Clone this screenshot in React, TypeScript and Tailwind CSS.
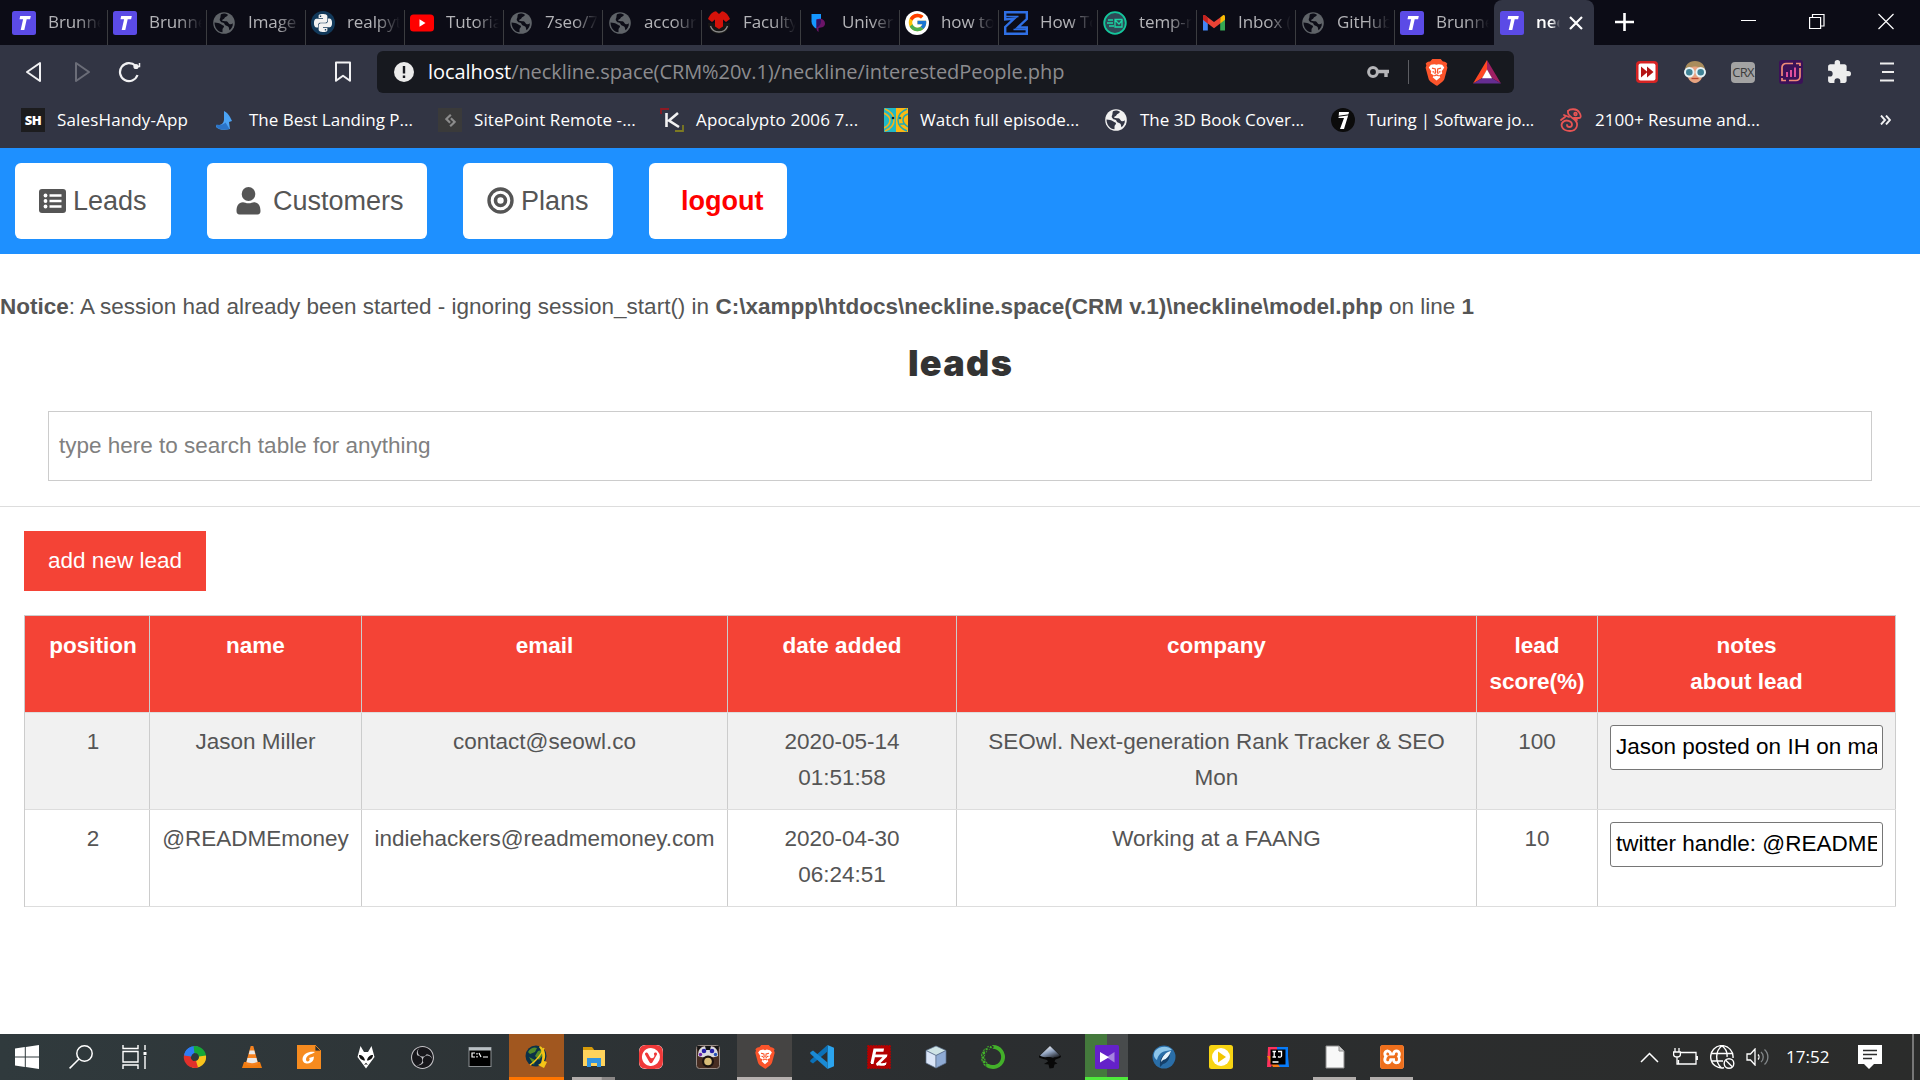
import type { ReactNode } from "react";
import {
  SiAnaconda,
  SiFilezilla,
  SiObsstudio,
  SiPython,
  SiSitepoint,
  SiVivaldi,
  SiXampp,
} from "react-icons/si";
import { FcGoogle } from "react-icons/fc";

/* ---------- favicons ---------- */

const TIcon = () => (
  <svg width="24" height="24" viewBox="0 0 24 24">
    <rect width="24" height="24" rx="2.500" fill="#5b4be6" />
    <path d="M8.200 5h10.600l-.7 3.300h-3.400L12.300 19H8.700l2.400-10.700H7.500z" fill="#fff" />
  </svg>
);

const Globe = ({ fill, land }: { fill: string; land: string }) => (
  <svg width="24" height="24" viewBox="0 0 24 24">
    <circle cx="12" cy="12" r="10.800" fill={fill} />
    <path
      d="M2.500 11.500c2.500.2 5 .4 6.500 1.800 1 1 2.500.8 3 2 .3 1.200-1.500 2-1.500 3.200v2.800C6 21 2.600 17 2.500 11.500zM9 3.200c3-1.200 5.500-.4 7 .8-1 1.800-3 1.600-3.600 3.200-.3 1.200-2.400.8-2.200 2.300.1.9 2.300.5 4.300.7 1.700.2 1.600 2.200 2.800 2.700 1.300.5 2.700.2 3.500-.7.400 3-1.400 5.600-3.300 7.100-.6-1.500-.3-2.600-1.400-3.700-1.200-1-3.300-.8-3.600-2.500-.3-1.600-1.700-1-3-1.800C8 10.200 7 8.500 8.200 7 8.800 6 8.200 4.500 9 3.200z"
      fill={land}
    />
  </svg>
);

const PyIcon = () => (
  <span className="flex size-6 items-center justify-center rounded-full bg-[#12395a]">
    <SiPython size={18} color="#f2f2f2" />
  </span>
);

const YtIcon = () => (
  <svg width="24" height="24" viewBox="0 0 24 24">
    <rect x="0" y="3.500" width="24" height="17" rx="3.500" fill="#f00" />
    <path d="M9.500 8.300v7.400l6-3.700z" fill="#fff" />
  </svg>
);

const FacultyIcon = () => (
  <svg width="24" height="24" viewBox="0 0 24 24">
    <path d="M1 12a11 11 0 0 0 22 0z" fill="#161616" />
    <path d="M3.500 15c2.500 8 14.500 8 17 0" fill="none" stroke="#8a8a8a" strokeWidth="1.300" />
    <path d="M1 8C3 3 6.500.5 9 .3L12 3l3-2.700c2.500.2 6 2.700 8 7.700l-4 3-3-2.500v7l-4 2.500-4-2.500v-7L5 11z" fill="#d4120a" />
  </svg>
);

const UniIcon = () => (
  <svg width="24" height="24" viewBox="0 0 24 24">
    <path d="M5.500 3H15v7.500c0 4-3 6-5 7-2.500-1.500-4.500-4-4.500-7z" fill="#1597ff" />
    <path d="M10.500 8.500c4-2 8.500 0 8.500 4 0 3.500-3 4-6.500 4.500V21c-2-1-2-3-2-5z" fill="#6b1468" />
    <path d="M10.500 8.500H15v2c0 3-2 5-4.500 6.500z" fill="#31105f" />
  </svg>
);

const ZIcon = () => (
  <svg width="24" height="24" viewBox="0 0 24 24" fill="none" stroke="#2f6fe4" strokeWidth="2.400">
    <path d="M1.200 8.500V1.200h21.600V8l-9 8.500h9v6.300H1.200V16l9-8.500z" />
    <path d="M1 5.500h13.500M9.500 18.500H23" strokeWidth="1.600" />
  </svg>
);

const TempIcon = () => (
  <svg width="24" height="24" viewBox="0 0 24 24">
    <circle cx="12" cy="12" r="10.800" fill="#2f4a57" stroke="#14c79c" strokeWidth="1.800" />
    <path d="M5 9h5M4 12h6M6 15h5M12 8.500h7v7.500h-7zM12 9l4 4 3.500-4" fill="none" stroke="#1dd6a5" strokeWidth="1.300" />
  </svg>
);

const GmailIcon = () => (
  <svg width="24" height="24" viewBox="0 0 24 24">
    <path d="M1 6v13.500h4.800V9z" fill="#4285f4" />
    <path d="M23 6v13.500h-4.800V9z" fill="#34a853" />
    <path d="M18.200 6.500L21 4.300c1-.6 2 .2 2 1.400v3l-4.800 3.800z" fill="#fbbc04" />
    <path d="M1 8.700V5.700c0-1.200 1-2 2-1.400L12 11l6.200-4.500v6L12 17.200 5.800 12.500z" fill="#ea4335" />
    <path d="M1 8.700V5.700c0-1.200 1-2 2-1.400l2.800 2.200v6z" fill="#c5221f" />
  </svg>
);

const gray = <Globe fill="#5f6368" land="#0c0c16" />;

type Tab = { icon: ReactNode; label: string };
const tabs: Tab[] = [
  { icon: <TIcon />, label: "Brunne" },
  { icon: <TIcon />, label: "Brunne" },
  { icon: gray, label: "Image" },
  { icon: <PyIcon />, label: "realpyt" },
  { icon: <YtIcon />, label: "Tutoria" },
  { icon: gray, label: "7seo/7" },
  { icon: gray, label: "accour" },
  { icon: <FacultyIcon />, label: "Faculty" },
  { icon: <UniIcon />, label: "Univer" },
  {
    icon: (
      <span className="flex size-6 items-center justify-center rounded-full bg-white">
        <FcGoogle size={21} />
      </span>
    ),
    label: "how to",
  },
  { icon: <ZIcon />, label: "How To" },
  { icon: <TempIcon />, label: "temp-m" },
  { icon: <GmailIcon />, label: "Inbox (" },
  { icon: gray, label: "GitHub" },
  { icon: <TIcon />, label: "Brunne" },
];

const TabBar = () => (
  <div className="flex h-[45px] bg-[#0c0c16] pl-[9px]">
    {tabs.map((t, i) => (
      <div key={i} className={"flex h-full w-[99px] shrink-0 items-center " + (i === 0 ? "pl-[3px]" : "pl-[5px]")}>
        <span className="flex size-6 shrink-0">{t.icon}</span>
        <span className="mb-[2px] ml-3 w-[53px] overflow-hidden text-[17px] leading-6 tracking-[-0.100px] whitespace-nowrap text-[#b4b4b8] [mask-image:linear-gradient(to_right,#000_55%,transparent)]">
          {t.label}
        </span>
        {i < 14 && <span className="mt-auto ml-auto h-[35px] w-px shrink-0 bg-[#3b3c40]" />}
      </div>
    ))}
    <div className="flex h-full w-[100px] shrink-0 items-center rounded-t-lg bg-[#323544] pl-[6px]">
      <TIcon />
      <span className="mb-[2px] ml-3 w-[24px] overflow-hidden text-[17px] font-semibold whitespace-nowrap text-white [mask-image:linear-gradient(to_right,#000_65%,transparent)]">
        nec
      </span>
      <svg className="ml-[9px]" width="14" height="14" viewBox="0 0 14 14" stroke="#fff" strokeWidth="2.200">
        <path d="M1 1l12 12M13 1L1 13" />
      </svg>
    </div>
    <svg className="mt-[13px] ml-[21px] shrink-0" width="19" height="18" viewBox="0 0 19 18" stroke="#fff" strokeWidth="2.600">
      <path d="M9.500 0v18M0 9h19" />
    </svg>
    <div className="mt-[13px] mr-[26px] ml-auto flex shrink-0 gap-[53px] text-white">
      <svg width="16" height="18" viewBox="0 0 16 18" stroke="currentColor">
        <path d="M1 7.500h15" />
      </svg>
      <svg width="16" height="18" viewBox="0 0 16 18" fill="none" stroke="currentColor" strokeWidth="1.200">
        <path d="M.6 4.500h11v11H.6zM3.500 4.500v-3h11.500v11.500h-3.400" />
      </svg>
      <svg width="16" height="18" viewBox="0 0 16 18" stroke="currentColor" strokeWidth="1.200">
        <path d="M.5 1l15 15M15.500 1l-15 15" />
      </svg>
    </div>
  </div>
);

const BraveIcon = ({ size }: { size: number }) => (
  <svg width={size} height={size} viewBox="0 0 24 24">
    <path
      d="M15.700 0H8.300L6.300 2.300C4.500 1.800 3 3.500 2.400 4.200l.6 1.400-.7 2.200 2.500 9.300c.4 1.500 1 2.300 2 3.100l4.200 2.900c.6.400 1.500.9 2 .4l4.200-3.300c1-.8 1.600-1.600 2-3.100l2.500-9.300-.7-2.200.6-1.400c-.7-.8-2.200-2.200-3.900-1.900z"
      fill="#fb542b"
    />
    <path
      d="M7 5.200l3.200-.6L12 5.200l1.800-.6 3.200.6 1.900 2.400-2.200 3.300.4 2-2.900 1.700 1.200 1.700-3.400 2.900-3.400-2.900 1.200-1.700-2.900-1.700.4-2-2.200-3.300z"
      fill="#fff"
    />
    <path
      d="M8 8.200l2.900.7.300 2.700-.8 1.600M16 8.200l-2.900.7-.3 2.700.8 1.600M10 15l2-.9 2 .9M8.500 11.300l1.500.3M15.500 11.300l-1.500.3"
      fill="none"
      stroke="#fb542b"
      strokeWidth="1.100"
    />
  </svg>
);

const Toolbar = () => (
  <div className="flex h-[54px] items-center pl-[25px]">
    <div className="flex w-[352px] items-center">
      <svg width="17" height="22" viewBox="0 0 17 22" fill="none" stroke="#f1f1f3" strokeWidth="2" strokeLinejoin="round">
        <path d="M15 2v18L2 11z" />
      </svg>
      <svg className="ml-8" width="17" height="22" viewBox="0 0 17 22" fill="none" stroke="#6b6d78" strokeWidth="2" strokeLinejoin="round">
        <path d="M2 2v18l13-9z" />
      </svg>
      <svg className="ml-[27px]" width="23" height="22" viewBox="0 0 23 22" fill="none" stroke="#f1f1f3" strokeWidth="2.200">
        <path d="M17.500 4.800A9 9 0 1 0 19.500 14" />
        <circle cx="18" cy="5.500" r="2.600" fill="#f1f1f3" stroke="none" />
        <path d="M18 5.500h3.500V2" strokeWidth="1.500" />
      </svg>
      <svg className="ml-[193px]" width="18" height="22" viewBox="0 0 18 22" fill="none" stroke="#f1f1f3" strokeWidth="2" strokeLinejoin="round">
        <path d="M2 1.500h14v18.300l-7-5-7 5z" />
      </svg>
    </div>
    <div className="flex h-[42px] w-[1137px] items-center rounded-md bg-[#17191f] pl-[17px]">
      <svg width="20" height="20" viewBox="0 0 20 20">
        <circle cx="10" cy="10" r="10" fill="#ebebeb" />
        <path d="M8.800 4h2.400v7.500H8.800zM8.800 13.500h2.400v2.500H8.800z" fill="#17191f" />
      </svg>
      <span className="ml-[14px] text-[20px] tracking-[-0.070px] text-[#8c8c8f]">
        <span className="text-white">localhost</span>/neckline.space(CRM%20v.1)/neckline/interestedPeople.php
      </span>
      <svg className="mr-[18px] ml-auto" width="23" height="14" viewBox="0 0 23 14" fill="none" stroke="#b5b5b8">
        <circle cx="6" cy="7" r="4.400" strokeWidth="3" />
        <path d="M10 6.500h12M19 6.500V12" strokeWidth="3.400" />
      </svg>
      <span className="h-6 w-[1.500px] bg-[#5d5e63]" />
      <span className="ml-[14px] flex">
        <BraveIcon size={27} />
      </span>
      <svg className="mr-[13px] ml-[23px]" width="28" height="24" viewBox="0 0 28 24">
        <path d="M14 0L0 23.500 9.300 18 14 10z" fill="#ff4724" />
        <path d="M14 0l14 23.500L18.700 18 14 10z" fill="#9e1f63" />
        <path d="M0 23.500h28L18.700 18H9.300z" fill="#662d91" />
        <path d="M14 9.500l5 8.800H9z" fill="#fff" />
      </svg>
    </div>
    <div className="ml-[121px] flex items-center gap-6">
      <svg width="24" height="24" viewBox="0 0 24 24">
        <rect x="1" y="1" width="22" height="22" rx="4" fill="#d62323" />
        <rect x="3.500" y="3.500" width="17" height="17" rx="2" fill="#fff" />
        <path d="M6 6.500l6.500 5.500L6 17.500zM12 6.500l6.500 5.500-6.500 5.500z" fill="#b31515" />
      </svg>
      <svg width="24" height="24" viewBox="0 0 24 24">
        <path d="M2 13C1 5 6 1 12 1s11 4 10 12z" fill="#a98c5c" />
        <path d="M4 11c3-6 13-6 16 0 .5 7-3.500 12-8 12s-8.500-5-8-12z" fill="#e8a380" />
        <path d="M8.500 18.500h7" stroke="#b5462f" strokeWidth="1.300" />
        <circle cx="6.300" cy="12.300" r="4.300" fill="#3f8296" stroke="#e6f2f5" strokeWidth="2" />
        <circle cx="17.700" cy="12.300" r="4.300" fill="#3f8296" stroke="#e6f2f5" strokeWidth="2" />
      </svg>
      <span className="flex h-[21px] w-6 items-center justify-center rounded-sm bg-[#a3a3a3] text-[13px] leading-none tracking-[-0.800px] text-[#3c3c3c]">
        CRX
      </span>
      <svg width="24" height="24" viewBox="0 0 24 24" fill="none">
        <rect width="24" height="24" rx="3" fill="#3c1158" />
        <path d="M14 3.500H7a4 4 0 0 0-4 4V16M10 20.500h7a4 4 0 0 0 4-4V8M3 18v2.500h4M21 6V3.500h-4" stroke="#f08c78" strokeWidth="1.700" />
        <path d="M8 12v5M12 10v7M16 7.500V17" stroke="#e0509b" strokeWidth="2" />
      </svg>
      <svg width="24" height="24" viewBox="1 1 22 22" fill="#ededed">
        <path d="M20.500 11H19V7c0-1.100-.9-2-2-2h-4V3.500a2.500 2.500 0 0 0-5 0V5H4c-1.100 0-2 .9-2 2v3.800h1.500a2.700 2.700 0 0 1 0 5.400H2V20c0 1.100.9 2 2 2h3.800v-1.500a2.700 2.700 0 0 1 5.400 0V22H17c1.100 0 2-.9 2-2v-4h1.500a2.500 2.500 0 0 0 0-5z" />
      </svg>
      <svg className="ml-1" width="15" height="20" viewBox="0 0 15 20" stroke="#ededed" strokeWidth="2">
        <path d="M1 1.500h14M3 10h12M1 18.500h14" />
      </svg>
    </div>
  </div>
);

const Bookmark = ({ icon, label, cell }: { icon: ReactNode; label: string; cell: string }) => (
  <div className={"flex shrink-0 items-center whitespace-nowrap " + cell}>
    <span className="mr-3 flex size-6 shrink-0 items-center justify-center">{icon}</span>
    {label}
  </div>
);

const Bookmarks = () => (
  <div className="flex h-[49px] items-center pb-[7px] pl-[21px] text-[17px] leading-6 text-white">
    <Bookmark
      cell="w-[192px] tracking-[0.150px]"
      label="SalesHandy-App"
      icon={
        <span className="flex size-6 items-center justify-center bg-[#1c1c1e] text-[13px] font-extrabold tracking-[-0.500px]">SH</span>
      }
    />
    <Bookmark
      cell="w-[225px]"
      label="The Best Landing P..."
      icon={
        <svg width="24" height="24" viewBox="0 0 24 24">
          <path d="M11 3c3 1.500 5 4 6 6l2 4-3 1 1 7c-5 1.500-11 1-14-2l.5-2c4 .5 8-1 7.500-7z" fill="#4ba3f5" />
          <path d="M3.500 16.500c3 .8 7 .5 9-2l4 6.500c-5 1-10 1-13-2z" fill="#2b74c8" />
        </svg>
      }
    />
    <Bookmark
      cell="w-[222px] tracking-[0.100px]"
      label="SitePoint Remote -..."
      icon={
        <span className="flex size-6 items-center justify-center bg-[#3a3a3a]">
          <SiSitepoint size={13} color="#8b8b8b" />
        </span>
      }
    />
    <Bookmark
      cell="w-[224px] tracking-[0.150px]"
      label="Apocalypto 2006 7..."
      icon={
        <svg width="24" height="24" viewBox="0 0 24 24" fill="none">
          <path d="M1 6V1h8" stroke="#8d1a24" strokeWidth="1.800" />
          <path d="M15 23h8v-6" stroke="#7d7a22" strokeWidth="1.800" />
          <path d="M6.500 5v14M18 5l-9 7.500 10 6.500" stroke="#f2f2f2" strokeWidth="2.600" />
        </svg>
      }
    />
    <Bookmark
      cell="w-[220px]"
      label="Watch full episode..."
      icon={
        <svg width="24" height="24" viewBox="0 0 24 24" fill="none">
          <path d="M0 0h12v24H0z" fill="#21b9c6" />
          <path d="M12 0h12v24H12z" fill="#fdb813" />
          <path d="M1 1c5 2 9 5 9 11s-4 9-9 11M0 5c4 2 6 4 6 7s-2 6-6 8" stroke="#f5b21b" strokeWidth="1.600" />
          <path d="M23 1c-5 2-9 5-9 11s4 9 9 11M24 6c-3 1-5 3-5 6s2 5 5 7M16 16h4" stroke="#21a9b4" strokeWidth="1.500" />
          <circle cx="9" cy="10" r="1.300" fill="#123" />
          <circle cx="16" cy="10" r="1.300" fill="#0a7f8a" />
        </svg>
      }
    />
    <Bookmark cell="w-[227px]" label="The 3D Book Cover..." icon={<Globe fill="#f1f1f1" land="#323544" />} />
    <Bookmark
      cell="w-[228px] tracking-[-0.200px]"
      label="Turing | Software jo..."
      icon={
        <svg width="24" height="24" viewBox="0 0 24 24">
          <circle cx="12" cy="12" r="12" fill="#0b0b0b" />
          <path d="M8 4h10l-1 4-4 13H9l4-11H7.500z" fill="#fff" />
          <path d="M7 8.300L18 6.800" stroke="#0b0b0b" strokeWidth="1" />
        </svg>
      }
    />
    <Bookmark
      cell="w-[240px]"
      label="2100+ Resume and..."
      icon={
        <svg width="24" height="24" viewBox="0 0 24 24" fill="none" stroke="#e85454" strokeWidth="1.800" strokeLinecap="round">
          <path d="M9 3c2-2.500 9-2.500 11 1 2 3 2.500 6 0 6h-5" />
          <circle cx="16.500" cy="6" r="1.300" />
          <path d="M9 3C8 8 13 9 16 12c4 4 2 11-5 11-8 0-10-6-7-9 3-3 9-1 9 2.500 0 3.500-5 3-5 .5" />
          <path d="M2 12l4-3M10 9L5 7M15 10l3 2" />
        </svg>
      }
    />
    <svg className="ml-[81px]" width="11" height="10" viewBox="0 0 11 10" fill="none" stroke="#f1f1f3" strokeWidth="1.900">
      <path d="M1 .5l4 4.500-4 4.500M6 .5L10 5 6 9.500" />
    </svg>
  </div>
);

/* ---------- page ---------- */

const NavButton = ({ cell, children }: { cell: string; children: ReactNode }) => (
  <div className={"flex h-[76px] items-center rounded-[6px] bg-white pb-px text-[27px] whitespace-nowrap text-[#555] " + cell}>{children}</div>
);

const Nav = () => (
  <nav className="flex h-[106px] items-start gap-9 bg-[#1e90ff] pt-[15px] pl-[15px]">
    <NavButton cell="w-[156px] pl-6">
      <svg className="mr-[7px]" width="27" height="24" viewBox="0 0 27 24">
        <rect width="27" height="24" rx="3" fill="#555" />
        <g fill="#fff">
          <circle cx="6.500" cy="6.500" r="1.900" />
          <circle cx="6.500" cy="12" r="1.900" />
          <circle cx="6.500" cy="17.500" r="1.900" />
          <path d="M10.500 5.200h12v2.600h-12zM10.500 10.700h12v2.600h-12zM10.500 16.200h12v2.600h-12z" />
        </g>
      </svg>
      Leads
    </NavButton>
    <NavButton cell="w-[220px] pl-[29px]">
      <svg className="mr-[12px]" width="25" height="28" viewBox="0 0 25 28" fill="#555">
        <ellipse cx="12.500" cy="7" rx="6.800" ry="7" />
        <path d="M.5 24c0-5 2-8.800 6.500-8.800 1.500 0 3 1.100 5.500 1.100s4-1.100 5.500-1.100c4.500 0 6.500 3.800 6.500 8.800 0 2.200-1 3.500-3 3.500h-18c-2 0-3-1.300-3-3.500z" />
      </svg>
      Customers
    </NavButton>
    <NavButton cell="w-[150px] pl-6">
      <svg className="mr-[7px]" width="27" height="27" viewBox="0 0 27 27" fill="none" stroke="#555">
        <circle cx="13.500" cy="13.500" r="11.500" strokeWidth="3.400" />
        <circle cx="13.500" cy="13.500" r="5" strokeWidth="3.600" />
      </svg>
      Plans
    </NavButton>
    <NavButton cell="w-[138px] pl-8">
      <span className="font-bold text-[#f00]">logout</span>
    </NavButton>
  </nav>
);

const columns = ["position", "name", "email", "date added", "company", "lead\nscore(%)", "notes\nabout lead"];
const leads = [
  ["1", "Jason Miller", "contact@seowl.co", "2020-05-14\n01:51:58", "SEOwl. Next-generation Rank Tracker & SEO\nMon", "100"],
  ["2", "@READMEmoney", "indiehackers@readmemoney.com", "2020-04-30\n06:24:51", "Working at a FAANG", "10"],
];
const notes = ["Jason posted on IH on march", "twitter handle: @READMEmoney"];

const rowClass =
  "grid h-[97px] grid-cols-[125px_212px_366px_229px_520px_121px_298px] border-b border-[#ddd] text-center leading-9 whitespace-pre";

const Page = () => (
  <main className="flex h-[886px] flex-col bg-white font-['Liberation_Sans',sans-serif] text-[22.500px] leading-9 text-[#555]">
    <Nav />
    <p className="mt-[35px] h-9 whitespace-nowrap">
      <b>Notice</b>: A session had already been started - ignoring session_start() in{" "}
      <b>C:\xampp\htdocs\neckline.space(CRM v.1)\neckline\model.php</b> on line <b>1</b>
    </p>
    <h2 className="mt-[14px] h-12 pl-[1px] text-center font-['Inter',sans-serif] text-[36px] leading-[48px] font-black tracking-[1.300px] text-[#333]">
      leads
    </h2>
    <div className="mx-12 mt-[24px] flex h-[70px] items-center border border-[#ccc] px-[10px] pb-px text-[#808080]">
      type here to search table for anything
    </div>
    <div className="mt-[25px] h-px bg-[#ddd]" />
    <div className="mt-[24px] ml-6 flex h-[60px] w-[182px] items-center justify-center bg-[#f44336] pb-px text-white">add new lead</div>
    <div className="mx-6 mt-6 border-t border-l border-[#ccc]">
      <div className={rowClass + " bg-[#f44336] font-bold text-white"}>
        {columns.map((c) => (
          <div key={c} className="border-r border-[#ccc] pt-3 first:pl-3">
            {c}
          </div>
        ))}
      </div>
      {leads.map((r, i) => (
        <div key={i} className={rowClass + (i === 0 ? " bg-[#f1f1f1]" : " bg-white")}>
          {r.map((c, j) => (
            <div key={j} className="border-r border-[#ccc] pt-[11px] first:pl-3">
              {c}
            </div>
          ))}
          <div className="border-r border-[#ccc] px-3 pt-3">
            <div className="h-[45px] rounded-[3px] border-[1.500px] border-[#767676] bg-white px-[5px] text-left leading-[42px] text-black">
              <div className="overflow-hidden">{notes[i]}</div>
            </div>
          </div>
        </div>
      ))}
    </div>
  </main>
);

/* ---------- taskbar ---------- */

const TaskItem = ({ children, under, tile }: { children: ReactNode; under?: string; tile?: string }) => (
  <div className="flex h-full w-[57px] shrink-0 justify-center">
    <div className={"flex h-full shrink-0 flex-col items-center " + (tile ?? "w-[43px]")}>
      <div className="flex h-[43px] items-center pt-[3px]">{children}</div>
      <div className={"h-[3px] w-full " + (under ?? "")} />
    </div>
  </div>
);

const Taskbar = () => (
  <footer className="flex h-[46px] bg-linear-to-r from-[#303a3d] via-[#2b2e30] to-[#2b2c2b] text-white">
    <div className="flex h-full w-[54px] items-center justify-center">
      <svg width="24" height="24" viewBox="0 0 24 24" fill="#fff">
        <path d="M0 3.400l9.800-1.300v9.400H0zM10.800 1.900L24 0v11.500H10.800zM0 12.500h9.800v9.400L0 20.600zM10.800 12.500H24V24l-13.200-1.900z" />
      </svg>
    </div>
    <div className="flex h-full w-[54px] items-center justify-center">
      <svg width="24" height="24" viewBox="0 0 24 24" fill="none" stroke="#fff" strokeWidth="1.500">
        <circle cx="15.500" cy="8.500" r="7.700" />
        <path d="M10 14L.6 23.400" />
      </svg>
    </div>
    <div className="flex h-full w-[58px] items-center justify-center pr-px">
      <svg className="mr-1" width="25" height="24" viewBox="0 0 25 24" fill="none" stroke="#fff" strokeWidth="1.400">
        <path d="M1 0v3.500h15V0M1 6.500h15v10.500H1zM1 24v-4h15v4M23 0v5M23 11v13" />
        <path d="M21.500 7h3v3h-3z" fill="#fff" stroke="none" />
      </svg>
    </div>
    <TaskItem>
      <svg width="24" height="24" viewBox="0 0 24 24" fill="none" strokeWidth="7">
        <path d="M4.500 12A7.500 7.500 0 0 1 14 4.800" stroke="#2d7df6" />
        <path d="M11 4.600a7.500 7.500 0 0 1 8.300 9" stroke="#17a637" />
        <path d="M19.500 11a7.500 7.500 0 0 1-9.500 8.200" stroke="#f9c31c" />
        <path d="M14 19.200A7.500 7.500 0 0 1 4.600 10" stroke="#e2302b" />
        <path d="M4.600 11A7.500 7.500 0 0 1 9 5.200" stroke="#2d7df6" />
      </svg>
    </TaskItem>
    <TaskItem>
      <svg width="24" height="24" viewBox="0 0 24 24">
        <path d="M4 17h16l2 6H2z" fill="#f07c10" />
        <path d="M10.700 1h2.600l5 18c-3 2-9.600 2-12.600 0z" fill="#f58220" />
        <path d="M9.700 5.500h4.600l1 3.800H8.700zM7.500 13h9l1 4c-3 1.500-8 1.500-11 0z" fill="#e9e9e9" />
      </svg>
    </TaskItem>
    <TaskItem>
      <svg width="24" height="24" viewBox="0 0 24 24">
        <path d="M0 0h18l6 6v18H0z" fill="#f68b1f" />
        <path d="M18 0l6 6h-6z" fill="#2c2f30" stroke="#f68b1f" strokeWidth=".8" />
        <path d="M18 7c-5-1-12 1-12.500 7 0 6 9 6 11 .5l.5-3-5 1.500c1 .8 1 3-1 3.500-3 .3-2.500-5 1-6.500 2-1 4-1.500 6-3z" fill="#fff" />
      </svg>
    </TaskItem>
    <TaskItem>
      <svg width="24" height="24" viewBox="0 0 24 24">
        <path d="M6.500 1l3.500 6h4l3.500-6 3 11L12 23.500 3.500 12z" fill="#fff" />
        <path d="M5 10c3 0 5.500 2 6 5.500C7.500 15.500 5 13 5 10zM19 10c-3 0-5.500 2-6 5.500 3.500 0 6-2.500 6-5.500zM10 20l2-2.200 2 2.200-2-.7z" fill="#111" />
      </svg>
    </TaskItem>
    <TaskItem>
      <span className="flex size-[23px] items-center justify-center rounded-full bg-[#17171b]">
        <SiObsstudio size={23} color="#c4c4c8" />
      </span>
    </TaskItem>
    <TaskItem>
      <svg width="24" height="24" viewBox="0 0 24 24">
        <rect x="1" y="2.500" width="22" height="19" fill="#000" stroke="#8c9093" />
        <path d="M1 2.500h22v3H1z" fill="#b9c0c4" />
        <path d="M7 8H4v4h3M9 8v1.500M9 11v1.500M11 8l2 4M15 12h5" stroke="#fff" strokeWidth="1.200" fill="none" />
      </svg>
    </TaskItem>
    <TaskItem tile="w-[55px] bg-[#a1571f]" under="bg-[#ff7500]">
      <svg width="24" height="24" viewBox="0 0 24 24">
        <circle cx="11" cy="11" r="10.500" fill="#0b3148" />
        <path d="M3 7c3-5 7-5 9-4l-2 4-5 2zM13 6l4-1 1 5-4 5-4-4zM4 12l6 3-1 5z" fill="#528b2b" />
        <path d="M15 1c6 3 6 11 4 15l3 1-3 6-6-3 3-2c2-6 2-11-2-16z" fill="#f4c417" />
        <path d="M19 3C16 10 11 16 5 20" stroke="#f4c417" strokeWidth="1.500" fill="none" />
      </svg>
    </TaskItem>
    <TaskItem under="bg-linear-to-r from-[#b1adab] from-68% to-[#8a8786] to-70%">
      <svg width="24" height="22" viewBox="0 0 24 22">
        <path d="M1 1h9l2 2.500V6H1z" fill="#d79b09" />
        <path d="M1 4h22v16H1z" fill="#ffd35c" />
        <path d="M5 21v-9h14v9h-4v-4H9v4z" fill="#3294df" />
      </svg>
    </TaskItem>
    <TaskItem>
      <span className="flex size-6 items-center justify-center rounded-md bg-white">
        <SiVivaldi size={24} color="#ef3939" />
      </span>
    </TaskItem>
    <TaskItem>
      <svg width="24" height="24" viewBox="0 0 24 24">
        <rect x=".5" y=".5" width="23" height="23" rx="3" fill="#472d22" stroke="#998c86" />
        <path d="M2 11C2 3 6 1 12 1s10 2 10 10c-5 2-15 2-20 0z" fill="#d9d9df" />
        <path d="M1 1h5L2 6zM23 1h-5l4 5zM9 1h6l-1 4h-4z" fill="#151515" />
        <circle cx="8" cy="6" r="2.300" fill="#2620a8" />
        <circle cx="16" cy="6" r="2.300" fill="#2620a8" />
        <circle cx="4.500" cy="9.500" r="1.700" fill="#6a22a8" />
        <circle cx="19.500" cy="9.500" r="1.700" fill="#2450b8" />
        <circle cx="12" cy="16.500" r="6" fill="#1c1411" />
        <circle cx="12" cy="16.500" r="3.800" fill="#d9bd78" />
      </svg>
    </TaskItem>
    <TaskItem tile="w-[55px] bg-[#454443]" under="bg-[#b7b1af]">
      <BraveIcon size={24} />
    </TaskItem>
    <TaskItem>
      <svg width="24" height="24" viewBox="0 0 24 24">
        <path d="M17.500 0L24 2.800v18.400L17.500 24z" fill="#2ba4ee" />
        <path d="M17.500 0v6.500L3 18.500.3 16.800v-1.600z" fill="#0b71b8" />
        <path d="M17.500 24v-6.500L3 5.500.3 7.200v1.600z" fill="#1a8ad4" />
      </svg>
    </TaskItem>
    <TaskItem>
      <span className="flex size-6 items-center justify-center bg-[radial-gradient(#fff_60%,transparent_62%)]">
        <SiFilezilla size={24} color="#b30000" />
      </span>
    </TaskItem>
    <TaskItem>
      <svg width="24" height="24" viewBox="0 0 24 24" stroke="#5f7391" strokeWidth=".7">
        <path d="M12 1l10 4.500-10 5-10-5z" fill="#cfe4e6" />
        <path d="M2 5.500l10 5V23L2 18z" fill="#dbe6f8" />
        <path d="M22 5.500l-10 5V23l10-5z" fill="#8fabd4" />
      </svg>
    </TaskItem>
    <TaskItem>
      <SiAnaconda size={24} color="#43b02a" />
    </TaskItem>
    <TaskItem>
      <svg width="24" height="24" viewBox="0 0 24 24">
        <defs>
          <linearGradient id="ink" x1=".2" y1="0" x2=".8" y2="1">
            <stop offset="0" stopColor="#fff" />
            <stop offset=".5" stopColor="#8ea0bd" />
            <stop offset="1" stopColor="#1a1c20" />
          </linearGradient>
        </defs>
        <path
          d="M12 1l10.500 9.500c1 1 .3 2-1 2.500l-4 1.500-1 2 3 2-3 1-1 3.500-4 .5-1-4-4.500-.5 4-2.500-1-1.500-7-2c-1.200-.5-1.300-1.500-.5-2.500z"
          fill="#080808"
        />
        <path d="M12 1l10 9.500c-2 2.500-5 1-7 2.500-4-2.500-9 1-13-2.500z" fill="url(#ink)" />
      </svg>
    </TaskItem>
    <TaskItem tile="w-[43px] bg-linear-to-r from-[#44793c] from-50% to-[#484b4c] to-50%" under="bg-[#4fea3c]">
      <svg width="24" height="24" viewBox="0 0 24 24">
        <rect width="24" height="24" rx="1.500" fill="#6421c9" />
        <path d="M19.500 7v10.500l-8-5.300z" fill="#a583df" />
        <path d="M5 7v10.500l9-5.300z" fill="#fff" />
      </svg>
    </TaskItem>
    <TaskItem>
      <svg width="24" height="24" viewBox="0 0 24 24">
        <circle cx="12" cy="12" r="11.500" fill="#2a6ea8" />
        <path d="M3 6C7 1 16 0 20 5l-6 1C8 7 6 11 5 15 2 13 1 10 3 6z" fill="#8cc5ea" />
        <path d="M18 7c-6 1-11 6-10 15l3-3c5-1 7-6 7-12z" fill="#14406b" />
        <path d="M19 6c-5 1-9 5-10 11l2-2c4-1 6-4 8-9z" fill="#e8f4fc" />
      </svg>
    </TaskItem>
    <TaskItem>
      <svg width="24" height="24" viewBox="0 0 24 24">
        <rect width="24" height="24" rx="2.500" fill="#f7d413" />
        <circle cx="12" cy="12" r="9" fill="#fff" />
        <path d="M9 6.500v11l8-5.500z" fill="#f2c500" />
      </svg>
    </TaskItem>
    <TaskItem>
      <svg width="22" height="22" viewBox="0 0 22 22">
        <path d="M1 1h12L4 21H0z" fill="#fe315d" />
        <path d="M10 1h11v9l1 11H10z" fill="#087cfa" />
        <path d="M0 10l6 11h7L5 10z" fill="#f97a12" />
        <path d="M3.500 3.500h15v15h-15z" fill="#000" />
        <path d="M5.500 5.500h3.500M7.200 5.500V11M5.500 11h3.500M11 5.500h3.500V10c0 1-2 1.500-3.500.6M5.500 16h6" stroke="#fff" strokeWidth="1.300" fill="none" />
      </svg>
    </TaskItem>
    <TaskItem under="bg-[#b1adab]">
      <svg width="20" height="24" viewBox="0 0 20 24">
        <path d="M1 1h13l5 5v17H1z" fill="#f8f8f8" stroke="#8d8d8d" />
        <path d="M14 1v5h5" fill="#ccc" stroke="#8d8d8d" />
      </svg>
    </TaskItem>
    <TaskItem under="bg-[#b1adab]">
      <span className="flex size-6 rounded-sm bg-white">
        <SiXampp size={24} color="#ee6f1c" />
      </span>
    </TaskItem>
    <div className="flex flex-1 items-center">
      <svg className="ml-[220px]" width="19" height="11" viewBox="0 0 19 11" fill="none" stroke="#fff" strokeWidth="1.500">
        <path d="M1 10l8.500-8.500L18 10" />
      </svg>
      <svg className="ml-[14px]" width="25" height="18" viewBox="0 0 25 18" fill="none" stroke="#fff" strokeWidth="1.300">
        <path d="M7 4.500h16V16H5.500v-4M24.300 8v4M2 0v4M6 0v4M.6 4h6.800v2.500c0 1.500-1.500 2.500-3.400 2.500S.6 8 .6 6.500zM4 9v7h2" />
      </svg>
      <svg className="ml-3" width="25" height="24" viewBox="0 0 25 24" fill="none" stroke="#fff" strokeWidth="1.400">
        <path d="M14 22.800A11.200 11.200 0 1 1 23 13M12 .8C5 6 5 17 11.500 23M12 .8c4 3 5.500 7 5 11M1 8.500h22M1 16h12" />
        <circle cx="19" cy="18.500" r="4.800" />
        <path d="M15.700 15.200l6.600 6.600" />
      </svg>
      <svg className="ml-[11px]" width="24" height="18" viewBox="0 0 24 18" fill="none" stroke="#fff" strokeWidth="1.300">
        <path d="M1 6h3.500L9 1v16l-4.500-5H1z" />
        <path d="M12 6.500c1.300 1.300 1.300 3.700 0 5" />
        <path d="M15 4c3 2.500 3 7.500 0 10M18.500 1.500c4.500 4 4.500 11 0 15" stroke="#83888a" />
      </svg>
      <span className="ml-[16px] w-[72px] text-[17px]">17:52</span>
      <svg width="24" height="24" viewBox="0 0 24 24">
        <path d="M0 0h24v19h-8l-5 5-5-5H0z" fill="#fff" />
        <path d="M5 5.500h14M5 9.500h14M5 13.500h9" stroke="#2c2d2d" strokeWidth="1.400" />
      </svg>
      <span className="mr-[6px] ml-auto h-full w-[2px] bg-[#777]" />
    </div>
  </footer>
);

export default function App() {
  return (
    <div className="flex h-[1080px] w-[1920px] flex-col overflow-hidden bg-white font-['Open_Sans',sans-serif]">
      <header className="h-[148px] shrink-0 bg-[#323544]">
        <TabBar />
        <Toolbar />
        <Bookmarks />
      </header>
      <Page />
      <Taskbar />
    </div>
  );
}
